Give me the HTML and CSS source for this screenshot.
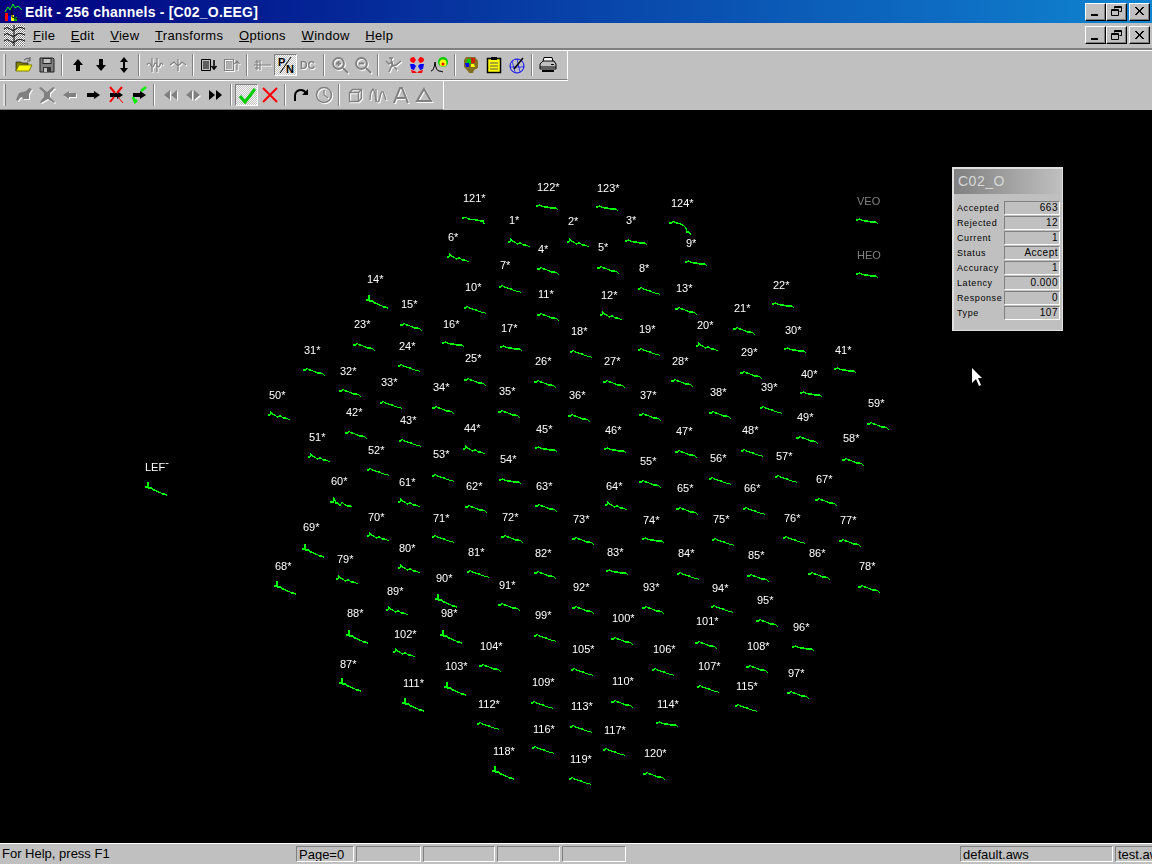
FILE: index.html
```html
<!DOCTYPE html>
<html lang="en">
<head>
<meta charset="utf-8">
<title>Edit - 256 channels - [C02_O.EEG]</title>
<link rel="stylesheet" href="styles.css">
</head>
<body>
<div class="app">
  <header class="titlebar">
    <svg class="appicon" viewBox="0 0 18 18"><rect x="1" y="10" width="3" height="8" fill="#f00"/><rect x="4" y="13" width="3" height="5" fill="#00f"/><rect x="7" y="12" width="3" height="6" fill="#ff0"/><rect x="10" y="14" width="3" height="4" fill="#0a0"/><polyline points="1,9 4,4 6,7 9,1 11,5 14,3 18,7" fill="none" stroke="#0f0"/><polyline points="8,5 8,14 14,16" fill="none" stroke="#000"/></svg>
    <span class="titletext">Edit - 256 channels - [C02_O.EEG]</span>
    <div class="winbtns">
      <button class="wb"><svg viewBox="0 0 13 11"><rect x="2" y="8" width="7" height="2"/></svg></button>
      <button class="wb"><svg viewBox="0 0 13 11"><path d="M4.500 .5h7v5h-2M4.500 .5v2M4.500 1.500h7" class="ol"/><path d="M1.500 3.500h7v6h-7zM1.500 4.500h7" class="ol"/></svg></button>
      <button class="wb wb-close"><svg viewBox="0 0 13 11"><path d="M2 1l8 8M3 1l8 8M10 1l-8 8M11 1l-8 8" class="ol"/></svg></button>
    </div>
  </header>
  <nav class="menubar">
    <svg class="docicon" viewBox="0 0 21 21"><defs><pattern id="dith" width="2" height="2" patternUnits="userSpaceOnUse"><rect width="2" height="2" fill="#fff"/><rect width="1" height="1" fill="#777"/><rect x="1" y="1" width="1" height="1" fill="#999"/></pattern></defs><rect width="21" height="21" fill="url(#dith)"/><path d="M0 4q3-3 6 0t6 0 9 0M0 10q3-3 6 0t6 0 9 0M0 16q3-3 6 0t6 0 9 0M10 0v21" fill="none" stroke="#000"/></svg>
    <div class="menus">
      <span><u>F</u>ile</span><span><u>E</u>dit</span><span><u>V</u>iew</span><span><u>T</u>ransforms</span><span><u>O</u>ptions</span><span><u>W</u>indow</span><span><u>H</u>elp</span>
    </div>
    <div class="winbtns">
      <button class="wb"><svg viewBox="0 0 13 11"><rect x="2" y="8" width="7" height="2"/></svg></button>
      <button class="wb"><svg viewBox="0 0 13 11"><path d="M4.500 .5h7v5h-2M4.500 .5v2M4.500 1.500h7" class="ol"/><path d="M1.500 3.500h7v6h-7zM1.500 4.500h7" class="ol"/></svg></button>
      <button class="wb wb-close"><svg viewBox="0 0 13 11"><path d="M2 1l8 8M3 1l8 8M10 1l-8 8M11 1l-8 8" class="ol"/></svg></button>
    </div>
  </nav>
  <div class="toolbar">
    <i class="grip"></i>
    <b class="tb"><svg viewBox="0 0 18 18"><path d="M1 6h5l1 1h6v2H5L1 15z" fill="#808000" stroke="#000" stroke-width=".6"/><path d="M1 15l3-6h13l-3 6z" fill="#ff0" stroke="#808000"/><path d="M9 4q3-3 6-1" fill="none" stroke="#555"/><path d="M15 1v4h-3" fill="none" stroke="#555"/></svg></b>
    <b class="tb"><svg viewBox="0 0 18 18"><path d="M2 2h13l1 1v13H2z" fill="#808080" stroke="#222"/><rect x="5" y="2.500" width="8" height="5" fill="#c0c0c0" stroke="#222"/><rect x="5" y="11" width="8" height="5" fill="#333"/><rect x="6" y="12" width="3" height="4" fill="#c0c0c0"/></svg></b>
    <i class="sep"></i>
    <b class="tb"><svg viewBox="0 0 18 18"><path d="M9 3l5 6h-3v6H7V9H4z"/></svg></b>
    <b class="tb"><svg viewBox="0 0 18 18"><path d="M9 15l5-6h-3V3H7v6H4z"/></svg></b>
    <b class="tb"><svg viewBox="0 0 18 18"><path d="M9 1l4 5h-3v6h3l-4 5-4-5h3V6H5z"/></svg></b>
    <i class="sep"></i>
    <b class="tb"><svg viewBox="0 0 18 18" class="off"><path d="M1 9q2-4 4 0t3 0 3 0 3 0 3 0M6 2v14M11 2v14"/></svg></b>
    <b class="tb"><svg viewBox="0 0 18 18" class="off"><path d="M1 9l4-3 4 4 4-4 4 3M9 3v12"/></svg></b>
    <i class="sep"></i>
    <b class="tb"><svg viewBox="0 0 18 18"><path d="M1.500 3.500h9v11h-9zM3 6h6M3 8h6M3 10h6M3 12h6" fill="none" stroke="#000"/><path d="M14 4v8M11.500 10l2.500 3 2.500-3" fill="none" stroke="#000" stroke-width="1.500"/></svg></b>
    <b class="tb"><svg viewBox="0 0 18 18" class="off"><path d="M1.500 3.500h9v11h-9zM3 6h6M3 8h6M3 10h6M3 12h6M14 14V6M11.500 8l2.500-3 2.500 3"/></svg></b>
    <i class="sep"></i>
    <b class="tb"><svg viewBox="0 0 18 18" class="off"><path d="M0 9h17M3 4v10M6 4v10M1 6h4M1 12h4"/></svg></b>
    <b class="tb pressed"><svg viewBox="0 0 18 18"><text x="1" y="10" class="pn">P</text><text x="9" y="17" class="pn">N</text><path d="M14 1L3 17" stroke="#000" fill="none"/></svg></b>
    <b class="tb"><svg viewBox="0 0 18 18"><text x="0" y="13" class="dc">DC</text></svg></b>
    <i class="sep"></i>
    <b class="tb"><svg viewBox="0 0 18 18" class="off"><circle cx="7.500" cy="7.500" r="5.500" stroke-width="1.800"/><path d="M5 7.500h5M7.500 5v5M12 12l5 5" stroke-width="2"/></svg></b>
    <b class="tb"><svg viewBox="0 0 18 18" class="off"><circle cx="7.500" cy="7.500" r="5.500" stroke-width="1.800"/><path d="M5 7.500h5M12 12l5 5" stroke-width="2"/></svg></b>
    <i class="sep"></i>
    <b class="tb"><svg viewBox="0 0 18 18" class="off"><path d="M1 5l3 3 3-2 1 4 3-1 5-4M6 2l1 7-3 7M8 9l4 5M4 2h4" stroke-width="1.500"/></svg></b>
    <b class="tb"><svg viewBox="0 0 18 18"><path d="M2 4q0-3 4-3l2 3-2 3-3-1zM16 4q0-3-4-3l-2 3 2 3 3-1z" fill="#f00"/><path d="M2 8l4 0 2 2-2 4-3-1zM16 8l-4 0-2 2 2 4 3-1z" fill="#00f"/><path d="M3 14l4 1 2 2-5 0zM15 14l-4 1-2 2 5 0z" fill="#f00"/></svg></b>
    <b class="tb"><svg viewBox="0 0 18 18"><path d="M0 15q3 0 4-9 1 9 4 9 2 0 4 1" fill="none" stroke="#000"/><circle cx="12" cy="6" r="5" fill="#0c0"/><circle cx="12" cy="7" r="3.500" fill="#ff0"/><circle cx="12" cy="8" r="1.500" fill="#f00"/></svg></b>
    <i class="sep"></i>
    <b class="tb"><svg viewBox="0 0 18 18"><path d="M4 1h9l3 4v7l-4 2-1 3H7l-2-3-3-3V4z" fill="#807020"/><path d="M5 3h4v5H4z" fill="#0c0"/><path d="M9 2h4v5H9z" fill="#d02000"/><path d="M3 7h4v4H4z" fill="#00f"/><path d="M9 8h3l1 3H9z" fill="#ff0"/></svg></b>
    <b class="tb"><svg viewBox="0 0 18 18"><rect x="2.500" y="2.500" width="13" height="14" fill="#ff0" stroke="#000" stroke-width="1.500"/><rect x="6" y="1" width="6" height="3" fill="#000"/><path d="M5 7h8M5 10h8M5 13h8" stroke="#555" fill="none"/></svg></b>
    <b class="tb"><svg viewBox="0 0 18 18"><circle cx="9" cy="10" r="7" fill="none" stroke="#00f"/><path d="M4 5l3 11M9 3l3 13M2 11h14" fill="none" stroke="#00f" stroke-width=".7"/><path d="M6 13l9-11" stroke="#000" stroke-width="1.500" fill="none"/></svg></b>
    <i class="sep"></i>
    <b class="tb"><svg viewBox="0 0 18 18"><path d="M5 1.500h8l1 4H4z" fill="#fff" stroke="#000"/><path d="M1 8l3-3h11l2 3v5H1z" fill="#c0c0c0" stroke="#000"/><path d="M1 11h16" stroke="#000"/><path d="M3 14h12v2H3z" fill="#000"/><rect x="12" y="8" width="3" height="1" fill="#000"/></svg></b>
  </div>
  <div class="toolbar">
    <i class="grip"></i>
    <b class="tb"><svg viewBox="0 0 18 18" class="offf"><path d="M1 14l2-5 1-2 7-2 3-3 3 1-3 5v5H8l-1-2-2 1-2 3z"/></svg></b>
    <b class="tb"><svg viewBox="0 0 18 18" class="offf"><path d="M1 2l2-1 6 5 6-5 2 1-5 5v4l5 5-1 1-6-4-7 4-1-1 4-5V7z"/></svg></b>
    <b class="tb"><svg viewBox="0 0 18 18" class="offf"><path d="M2 9l6-4v2h7v4H8v2z"/></svg></b>
    <b class="tb"><svg viewBox="0 0 18 18"><path d="M16 9l-6-4v2H3v4h7v2z"/></svg></b>
    <b class="tb"><svg viewBox="0 0 18 18"><path d="M16 9l-6-4v2H3v4h7v2z"/><path d="M3 1l5 6M15 1l-5 6M3 16l4-5" stroke="#f00" stroke-width="2" fill="none"/><path d="M11 11l5 6" stroke="#f00" fill="none"/></svg></b>
    <b class="tb"><svg viewBox="0 0 18 18"><path d="M16 9l-6-4v2H3v4h7v2z"/><path d="M3 11l2 5 2-2M11 5l5-4" stroke="#0e0" stroke-width="2.500" fill="none"/></svg></b>
    <i class="sep"></i>
    <b class="tb"><svg viewBox="0 0 18 18" class="offf"><path d="M9 4v10L3 9zM16 4v10L10 9z"/></svg></b>
    <b class="tb"><svg viewBox="0 0 18 18" class="offf"><path d="M8 4v10L2 9zM10 4v10l6-5z"/></svg></b>
    <b class="tb"><svg viewBox="0 0 18 18"><path d="M2 4v10l6-5zM9 4v10l6-5z"/></svg></b>
    <i class="sep"></i>
    <b class="tb pressed"><svg viewBox="0 0 18 18"><path d="M2 10l5 6L17 3" stroke="#0c0" stroke-width="3" fill="none"/></svg></b>
    <b class="tb"><svg viewBox="0 0 18 18"><path d="M2 2l14 14M16 2L2 16" stroke="#f00" stroke-width="2" fill="none"/></svg></b>
    <i class="sep"></i>
    <b class="tb"><svg viewBox="0 0 18 18"><path d="M3 15V9q1-5 6-5 3 0 5 3" fill="none" stroke="#000" stroke-width="2"/><path d="M16 3v6h-6z"/></svg></b>
    <b class="tb"><svg viewBox="0 0 18 18" class="off"><circle cx="9" cy="9" r="7.500" stroke-width="1.500"/><path d="M9 4v5l4 3"/></svg></b>
    <i class="sep"></i>
    <b class="tb"><svg viewBox="0 0 18 18" class="off"><path d="M3.500 6.500h9v9h-9zM3.500 6.500l3-3h9v9l-3 3M12.500 6.500l3-3" stroke-width="1.300"/></svg></b>
    <b class="tb"><svg viewBox="0 0 18 18" class="off"><path d="M1 14q0-8 3-11 2 2 3 11 1 3 3 1l2-8q2-3 3 1l2 6" stroke-width="1.300"/><path d="M7 3v13"/></svg></b>
    <b class="tb"><svg viewBox="0 0 18 18" class="off"><path d="M2 17L8 2h2l6 15M5 12h8" stroke-width="2"/></svg></b>
    <b class="tb"><svg viewBox="0 0 18 18" class="off"><path d="M9 3l7 12H2z" stroke-width="2"/></svg></b>
  </div>
  <main class="canvas">
    <svg class="plot" viewBox="0 110 1152 733" width="1152" height="733">
      <defs>
        <polyline id="a" points="0,3 2,3 3,0 4,2 7,3 9,5 10,5 11,4 13,4 15,6 18,6 20,7 22,8"/>
        <polyline id="b" points="0,2 2,2 4,1 6,3 8,3 9,4 11,3 13,4 16,4 18,5 21,5 22,8"/>
        <polyline id="c" points="0,3 3,3 4,1 6,3 8,3 10,4 12,5 13,5 14,6 16,6 18,6 20,7 22,9"/>
        <polyline id="f" points="0,1 2,1 3,0 6,1 8,2 12,2 14,3 17,3 20,3 22,5"/>
        <polyline id="s" points="0,5 2,5 3,0 4,6 7,6 8,8 10,8 11,9 14,10 16,11 17,12 19,12 22,13"/>
        <polyline id="t" points="0,4 3,4 4,0 6,5 8,5 10,8 12,4 15,7 18,8 21,8 22,9"/>
        <polyline id="d" points="0,3 3,3 4,1 7,3 9,3 11,4 14,5 17,8 18,12 20,12 21,14 22,14"/>
        <polyline id="g" points="0,3 2,3 3,1 5,3 6,3 8,4 9,4 11,5 13,5 15,7 16,6 18,8 20,7 22,9"/>
      </defs>
      <g class="labels">
<text x="463" y="202">121*</text><text x="537" y="191">122*</text><text x="597" y="192">123*</text><text x="671" y="207">124*</text>
<text x="509" y="224">1*</text><text x="568" y="225">2*</text><text x="626" y="224">3*</text><text x="538" y="253">4*</text><text x="598" y="251">5*</text><text x="448" y="241">6*</text><text x="500" y="269">7*</text><text x="639" y="272">8*</text><text x="686" y="247">9*</text>
<text x="465" y="291">10*</text><text x="538" y="298">11*</text><text x="601" y="299">12*</text><text x="676" y="292">13*</text><text x="367" y="283">14*</text><text x="401" y="308">15*</text><text x="443" y="328">16*</text><text x="501" y="332">17*</text><text x="571" y="335">18*</text><text x="639" y="333">19*</text><text x="697" y="329">20*</text>
<text x="734" y="312">21*</text><text x="773" y="289">22*</text><text x="354" y="328">23*</text><text x="399" y="350">24*</text><text x="465" y="362">25*</text><text x="535" y="365">26*</text><text x="604" y="365">27*</text><text x="672" y="365">28*</text><text x="741" y="356">29*</text><text x="785" y="334">30*</text>
<text x="304" y="354">31*</text><text x="340" y="375">32*</text><text x="381" y="386">33*</text><text x="433" y="391">34*</text><text x="499" y="395">35*</text><text x="569" y="399">36*</text><text x="640" y="399">37*</text><text x="710" y="396">38*</text><text x="761" y="391">39*</text><text x="801" y="378">40*</text>
<text x="835" y="354">41*</text><text x="346" y="416">42*</text><text x="400" y="424">43*</text><text x="464" y="432">44*</text><text x="536" y="433">45*</text><text x="605" y="434">46*</text><text x="676" y="435">47*</text><text x="742" y="434">48*</text><text x="797" y="421">49*</text><text x="269" y="399">50*</text>
<text x="309" y="441">51*</text><text x="368" y="454">52*</text><text x="433" y="458">53*</text><text x="500" y="463">54*</text><text x="640" y="465">55*</text><text x="710" y="462">56*</text><text x="776" y="460">57*</text><text x="843" y="442">58*</text><text x="868" y="407">59*</text>
<text x="331" y="485">60*</text><text x="399" y="486">61*</text><text x="466" y="490">62*</text><text x="536" y="490">63*</text><text x="606" y="490">64*</text><text x="677" y="492">65*</text><text x="744" y="492">66*</text><text x="816" y="483">67*</text><text x="275" y="570">68*</text><text x="303" y="531">69*</text>
<text x="368" y="521">70*</text><text x="433" y="522">71*</text><text x="502" y="521">72*</text><text x="573" y="523">73*</text><text x="643" y="524">74*</text><text x="713" y="523">75*</text><text x="784" y="522">76*</text><text x="840" y="524">77*</text><text x="859" y="570">78*</text><text x="337" y="563">79*</text>
<text x="399" y="552">80*</text><text x="468" y="556">81*</text><text x="535" y="557">82*</text><text x="607" y="556">83*</text><text x="678" y="557">84*</text><text x="748" y="559">85*</text><text x="809" y="557">86*</text><text x="340" y="668">87*</text><text x="347" y="617">88*</text><text x="387" y="595">89*</text>
<text x="436" y="582">90*</text><text x="499" y="589">91*</text><text x="573" y="591">92*</text><text x="643" y="591">93*</text><text x="712" y="592">94*</text><text x="757" y="604">95*</text><text x="793" y="631">96*</text><text x="788" y="677">97*</text><text x="441" y="617">98*</text><text x="535" y="619">99*</text>
<text x="612" y="622">100*</text><text x="696" y="625">101*</text><text x="394" y="638">102*</text><text x="445" y="670">103*</text><text x="480" y="650">104*</text><text x="572" y="653">105*</text><text x="653" y="653">106*</text><text x="698" y="670">107*</text><text x="747" y="650">108*</text><text x="532" y="686">109*</text>
<text x="612" y="685">110*</text><text x="403" y="687">111*</text><text x="478" y="708">112*</text><text x="571" y="710">113*</text><text x="657" y="708">114*</text><text x="736" y="690">115*</text><text x="533" y="733">116*</text><text x="604" y="734">117*</text><text x="493" y="755">118*</text><text x="570" y="763">119*</text><text x="644" y="757">120*</text>
<text x="145" y="471">LEF<tspan class="cut" dy="-5">-</tspan></text>
<text class="dim" x="857" y="205">VEO</text><text class="dim" x="857" y="259">HEO</text>
      </g>
      <g class="traces">
<use href="#b" x="462" y="216"/><use href="#f" x="536" y="205"/><use href="#f" x="596" y="206"/><use href="#d" x="669" y="220"/>
<use href="#a" x="508" y="239"/><use href="#a" x="567" y="239"/><use href="#f" x="625" y="240"/><use href="#c" x="537" y="266"/><use href="#c" x="597" y="265"/><use href="#a" x="447" y="254"/><use href="#g" x="499" y="284"/><use href="#g" x="638" y="286"/><use href="#f" x="685" y="261"/>
<use href="#g" x="464" y="305"/><use href="#c" x="537" y="312"/><use href="#a" x="600" y="312"/><use href="#c" x="675" y="306"/><use href="#s" x="366" y="295"/><use href="#c" x="400" y="322"/><use href="#f" x="442" y="342"/><use href="#f" x="500" y="346"/><use href="#g" x="570" y="349"/><use href="#g" x="638" y="347"/><use href="#a" x="696" y="343"/>
<use href="#c" x="733" y="326"/><use href="#f" x="772" y="303"/><use href="#c" x="353" y="342"/><use href="#g" x="398" y="363"/><use href="#c" x="464" y="377"/><use href="#c" x="534" y="379"/><use href="#c" x="603" y="379"/><use href="#c" x="671" y="378"/><use href="#c" x="740" y="370"/><use href="#f" x="784" y="348"/>
<use href="#c" x="303" y="367"/><use href="#c" x="339" y="388"/><use href="#g" x="380" y="400"/><use href="#c" x="432" y="405"/><use href="#c" x="498" y="409"/><use href="#c" x="568" y="413"/><use href="#c" x="639" y="412"/><use href="#c" x="709" y="410"/><use href="#g" x="760" y="405"/><use href="#f" x="800" y="392"/>
<use href="#f" x="834" y="368"/><use href="#c" x="345" y="430"/><use href="#g" x="399" y="438"/><use href="#a" x="463" y="446"/><use href="#f" x="535" y="447"/><use href="#f" x="604" y="448"/><use href="#c" x="675" y="449"/><use href="#g" x="741" y="448"/><use href="#c" x="796" y="435"/><use href="#a" x="268" y="412"/>
<use href="#a" x="308" y="454"/><use href="#g" x="367" y="467"/><use href="#g" x="432" y="473"/><use href="#f" x="499" y="479"/><use href="#c" x="639" y="479"/><use href="#g" x="709" y="476"/><use href="#g" x="775" y="474"/><use href="#c" x="842" y="457"/><use href="#c" x="867" y="421"/>
<use href="#t" x="330" y="498"/><use href="#a" x="398" y="499"/><use href="#c" x="465" y="504"/><use href="#c" x="535" y="503"/><use href="#a" x="605" y="502"/><use href="#c" x="676" y="506"/><use href="#g" x="743" y="506"/><use href="#c" x="815" y="497"/><use href="#s" x="274" y="581"/><use href="#s" x="302" y="544"/>
<use href="#a" x="367" y="533"/><use href="#g" x="432" y="534"/><use href="#c" x="501" y="534"/><use href="#c" x="572" y="536"/><use href="#f" x="642" y="538"/><use href="#g" x="712" y="537"/><use href="#g" x="783" y="535"/><use href="#c" x="839" y="538"/><use href="#c" x="858" y="584"/><use href="#a" x="336" y="576"/>
<use href="#a" x="398" y="565"/><use href="#g" x="467" y="569"/><use href="#c" x="534" y="570"/><use href="#f" x="606" y="570"/><use href="#g" x="677" y="571"/><use href="#c" x="747" y="573"/><use href="#c" x="808" y="571"/><use href="#s" x="339" y="678"/><use href="#s" x="346" y="630"/><use href="#a" x="386" y="607"/>
<use href="#s" x="435" y="594"/><use href="#c" x="498" y="602"/><use href="#c" x="572" y="605"/><use href="#c" x="642" y="605"/><use href="#g" x="711" y="604"/><use href="#c" x="756" y="618"/><use href="#f" x="792" y="646"/><use href="#c" x="787" y="690"/><use href="#s" x="440" y="630"/><use href="#g" x="534" y="633"/>
<use href="#c" x="611" y="636"/><use href="#c" x="695" y="640"/><use href="#a" x="393" y="649"/><use href="#s" x="444" y="682"/><use href="#c" x="479" y="663"/><use href="#g" x="571" y="667"/><use href="#g" x="652" y="667"/><use href="#g" x="697" y="684"/><use href="#c" x="746" y="664"/><use href="#g" x="531" y="700"/>
<use href="#c" x="611" y="699"/><use href="#s" x="402" y="698"/><use href="#g" x="477" y="721"/><use href="#g" x="570" y="724"/><use href="#f" x="656" y="722"/><use href="#g" x="735" y="703"/><use href="#g" x="532" y="745"/><use href="#g" x="603" y="747"/><use href="#s" x="492" y="766"/><use href="#g" x="569" y="776"/><use href="#c" x="643" y="771"/>
<use href="#s" x="145" y="482"/>
<use href="#f" x="856" y="219"/><use href="#f" x="856" y="273"/>
      </g>
    </svg>
    <aside class="panel">
      <h2 class="panel-title">C02_O</h2>
      <dl class="stats">
        <dt>Accepted</dt><dd>663</dd>
        <dt>Rejected</dt><dd>12</dd>
        <dt>Current</dt><dd>1</dd>
        <dt>Status</dt><dd>Accept</dd>
        <dt>Accuracy</dt><dd>1</dd>
        <dt>Latency</dt><dd>0.000</dd>
        <dt>Response</dt><dd>0</dd>
        <dt>Type</dt><dd>107</dd>
      </dl>
    </aside>
    <svg class="cursor" viewBox="0 0 11 20" width="11" height="20"><path d="M1 1v15l4-4 3 7 2-1-3-7h4z" fill="#fff"/></svg>
  </main>
  <footer class="statusbar">
    <span class="st-msg">For Help, press F1</span>
    <span class="st st-page">Page=0</span>
    <span class="st st-a"></span>
    <span class="st st-b"></span>
    <span class="st st-c"></span>
    <span class="st st-d"></span>
    <span class="st-gap"></span>
    <span class="st st-file">default.aws</span>
    <span class="st st-last">test.aws</span>
  </footer>
</div>
</body>
</html>
```
FILE: styles.css
```css
* { box-sizing: border-box; }
html, body { margin: 0; padding: 0; height: 100%; overflow: hidden; }
body { font-family: "Liberation Sans", Arial, sans-serif; background: #c0c0c0; color: #000; }
.app { width: 1152px; height: 864px; display: flex; flex-direction: column; background: #c0c0c0; overflow: hidden; }

.titlebar { height: 23px; flex: none; display: flex; align-items: center; padding-left: 4px; background: linear-gradient(90deg, #000080, #1084d0); color: #fff; }
.appicon { width: 18px; height: 18px; flex: none; }
.titletext { margin-left: 3px; font-size: 14px; font-weight: bold; letter-spacing: .2px; white-space: nowrap; }
.winbtns { margin-left: auto; display: flex; padding-right: 2px; }
.wb { width: 21px; height: 18px; padding: 0; margin: 0; background: #c0c0c0; border: 1px solid; border-color: #fff #000 #000 #fff; box-shadow: inset -1px -1px 0 #808080; display: flex; align-items: center; justify-content: center; }
.wb-close { margin-left: 2px; }
.wb svg { width: 13px; height: 11px; }
.ol { fill: none; stroke: #000; }

.menubar { height: 27px; flex: none; display: flex; align-items: flex-start; padding-left: 4px; padding-top: 2px; border-bottom: 2px solid #808080; box-shadow: 0 1px 0 #fff; position: relative; }
.menubar .winbtns { padding-top: 1px; }
.docicon { width: 21px; height: 21px; flex: none; }
.menus { display: flex; gap: 15.700px; margin-left: 8px; font-size: 13px; letter-spacing: .3px; line-height: 21px; }

.toolbar { height: 30px; flex: none; width: max-content; padding-right: 8px; display: flex; align-items: center; border-bottom: 1px solid #808080; border-right: 1px solid #fff; box-shadow: 0 1px 0 #fff; }
.grip { width: 3px; height: 22px; margin: 0 6px 0 3px; background: #dfdfdf; border-right: 1px solid #808080; flex: none; }
.tb { width: 23px; height: 22px; flex: none; display: flex; align-items: center; justify-content: center; }
.tb svg { width: 18px; height: 18px; overflow: visible; }
.pressed { border: 1px solid; border-color: #808080 #fff #fff #808080; background: repeating-conic-gradient(#fff 0 25%, #c0c0c0 0 50%) 0 0 / 2px 2px; }
.sep { width: 8px; height: 22px; flex: none; position: relative; }
.sep::after { content: ""; position: absolute; left: 3px; top: 0; bottom: 0; width: 2px; background: linear-gradient(90deg, #808080 50%, #fff 50%); }
.off { fill: none; stroke: #808080; stroke-width: 1.200; filter: drop-shadow(1px 1px 0 #fff); }
.offf { fill: #808080; filter: drop-shadow(1px 1px 0 #fff); }
.pn { font: bold 11px "Liberation Sans", sans-serif; }
.dc { font: bold 10.500px "Liberation Sans", sans-serif; fill: #808080; filter: drop-shadow(1px 1px 0 #fff); }

.canvas { flex: 1; min-height: 0; background: #000; position: relative; border-bottom: 1px solid #fff; }
.plot { display: block; will-change: transform; }
.labels text { font: 11px "Liberation Sans", sans-serif; fill: #fff; }
.labels .dim { fill: #808080; }
.traces use { fill: none; stroke: #00ff00; stroke-width: 1.300; shape-rendering: crispEdges; }

.panel { position: absolute; left: 952px; top: 57px; width: 111px; height: 164px; padding: 0; background: #c0c0c0; border: 2px solid #dfdfdf; border-right-width: 1px; border-bottom-width: 1px; }
.panel-title { margin: 0; height: 25px; padding-left: 4px; font: normal 14px/25px "Liberation Sans", sans-serif; letter-spacing: .5px; color: #d8d8d8; background: linear-gradient(90deg, #808080, #c0c0c0); }
.stats { margin: 7px 0 0; display: grid; grid-template-columns: 50px 56px; grid-auto-rows: 14px; row-gap: 1px; font-size: 9px; letter-spacing: .6px; line-height: 14px; }
.stats dt { padding-left: 3px; white-space: nowrap; }
.stats dd { margin: 0; text-align: right; padding-right: 1px; border: 1px solid; border-color: #808080 #fff #fff #808080; font-size: 10px; letter-spacing: .5px; line-height: 12px; }

.cursor { position: absolute; left: 971px; top: 257px; }

.statusbar { height: 20px; flex: none; display: flex; align-items: flex-end; font-size: 13px; padding-bottom: 2px; line-height: 16px; }
.st-msg { width: 296px; flex: none; padding-left: 2px; height: 16px; white-space: nowrap; }
.st { height: 16px; flex: none; padding-left: 2px; border: 1px solid; border-color: #808080 #fff #fff #808080; overflow: hidden; white-space: nowrap; margin-right: 2px; }
.st-page { width: 58px; }
.st-a { width: 65px; }
.st-b { width: 72px; }
.st-c { width: 63px; }
.st-d { width: 64px; margin-right: 0; }
.st-gap { flex: 1; }
.st-file { width: 153px; }
.st-last { width: 37px; margin-right: 0; border-right: 0; }
.cut { font-size: 11px; }
```
